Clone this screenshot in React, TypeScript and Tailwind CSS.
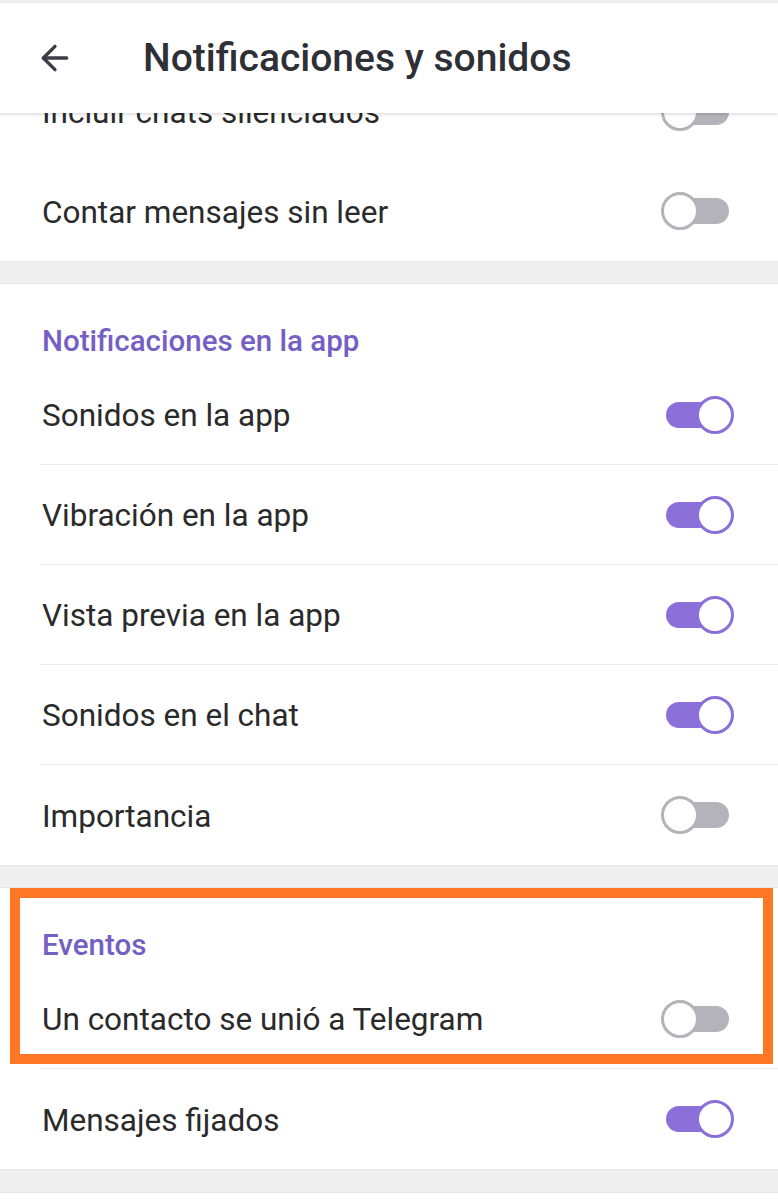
import { ArrowLeft } from "lucide-react";

const font = { fontFamily: "Roboto, 'Noto Sans', sans-serif" };

function Toggle({ on }: { on: boolean }) {
  return (
    <div className="relative h-[38px] w-[73px] shrink-0">
      <div
        className={`absolute left-[5px] right-[5px] top-[6px] h-[26px] rounded-full ${
          on ? "bg-[#8a70d8]" : "bg-[#b4b3b9]"
        }`}
      />
      <div
        className={`absolute top-0 h-[38px] w-[38px] rounded-full border-[3.5px] bg-white ${
          on ? "right-0 border-[#8a70d8]" : "left-0 border-[#b4b3b9]"
        }`}
      />
    </div>
  );
}

function Row({ label, on, divider = true }: { label: string; on: boolean; divider?: boolean }) {
  return (
    <div className="pl-[40px]">
      <div
        className={`flex h-[100px] items-center justify-between pr-[44px] ${
          divider ? "border-b border-[#ebebeb]" : ""
        }`}
      >
        <span className="pl-[2px] pt-[3px] text-[31.5px] leading-[38px] text-[#2a2a2a]">{label}</span>
        <Toggle on={on} />
      </div>
    </div>
  );
}

function SectionTitle({ children }: { children: string }) {
  return (
    <div className="h-[81px] pl-[42px] pt-[40px]">
      <span className="block text-[29.5px] font-medium leading-[34px] text-[#7460c4]">{children}</span>
    </div>
  );
}

export default function App() {
  return (
    <div className="h-[1200px] w-[778px] overflow-hidden bg-[#efefef]" style={font}>
      <div className="h-[3px] bg-[#efefef]" />
      <header className="relative z-10 flex h-[110px] items-center bg-white shadow-[0_2px_3px_rgba(0,0,0,0.12)]">
        <ArrowLeft className="ml-[35px] h-[40px] w-[40px] text-[#3c3b46]" strokeWidth={2} />
        <h1 className="ml-[68px] text-[39px] font-medium leading-[46px] text-[#2f2f36]">
          Notificaciones y sonidos
        </h1>
      </header>

      <section className="bg-white">
        <div className="h-[48px] overflow-hidden">
          <div className="-mt-[51px]">
            <Row label="Incluir chats silenciados" on={false} />
          </div>
        </div>
        <Row label="Contar mensajes sin leer" on={false} divider={false} />
      </section>

      <div className="h-[23px] border-y border-[#e6e6e6]" />

      <section className="bg-white">
        <SectionTitle>Notificaciones en la app</SectionTitle>
        <Row label="Sonidos en la app" on />
        <Row label="Vibración en la app" on />
        <Row label="Vista previa en la app" on />
        <Row label="Sonidos en el chat" on />
        <Row label="Importancia" on={false} divider={false} />
      </section>

      <div className="h-[23px] border-y border-[#e6e6e6]" />

      <section className="relative bg-white">
        <SectionTitle>Eventos</SectionTitle>
        <Row label="Un contacto se unió a Telegram" on={false} />
        <Row label="Mensajes fijados" on divider={false} />
        <div className="pointer-events-none absolute left-[10px] top-0 h-[176px] w-[763px] border-[10px] border-[#ff7624]" />
      </section>

      <div className="h-[24px] border-y border-[#e6e6e6]" />
      <div className="h-[20px] bg-white" />
    </div>
  );
}
